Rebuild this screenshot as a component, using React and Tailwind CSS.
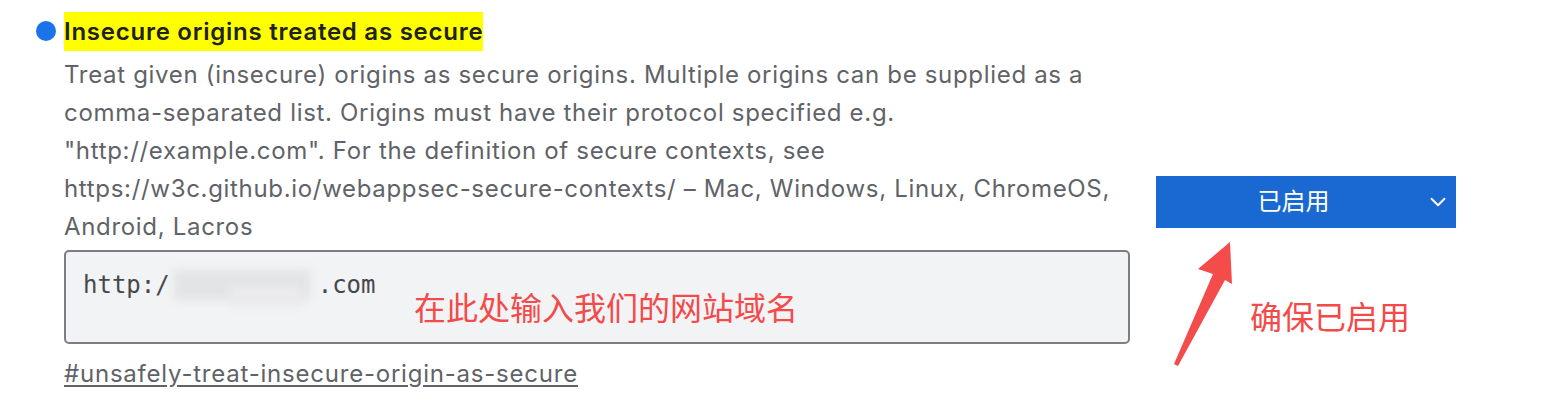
import { ChevronDown } from 'lucide-react'

const descLines = [
  'Treat given (insecure) origins as secure origins. Multiple origins can be supplied as a',
  'comma-separated list. Origins must have their protocol specified e.g.',
  '"http://example.com". For the definition of secure contexts, see',
  'https://w3c.github.io/webappsec-secure-contexts/ – Mac, Windows, Linux, ChromeOS,',
  'Android, Lacros',
]

const App = () => {
  return (
    <div className="relative w-[1542px] h-[420px] bg-white overflow-hidden font-['Inter','Noto_Sans_CJK_SC',sans-serif]">
      <div className="flex items-start pl-[36px] pt-[12px]">
        {/* Dot */}
        <div className="w-[20px] h-[20px] mt-[9px] rounded-full bg-[#1a73e8] shrink-0" />

        {/* Flag content */}
        <div className="ml-[8px] w-[1066px]">
          <h2 className="h-[39px]">
            <span className="inline-block bg-[#ffff00] text-[24px] leading-[39px] tracking-[0.75px] font-semibold text-[#202124]">
              Insecure origins treated as secure
            </span>
          </h2>
          <div className="mt-[5px] text-[24px] leading-[38px] tracking-[0.68px] text-[#5f6368]">
            {descLines.map((line) => (
              <div key={line} className="whitespace-nowrap">{line}</div>
            ))}
          </div>
          <div className="mt-[4px] h-[94px] rounded-[5px] border-2 border-[#7b7f84] bg-[#f1f3f4] pl-[17px] pt-[8px]">
            <div className="flex items-center font-['DejaVu_Sans_Mono',monospace] text-[24px] leading-[32px] text-[#45484c]">
              <span>http:/</span>
              <span className="relative inline-block w-[148px] h-[44px] mt-[6px]">
                <span className="absolute left-[4px] top-[4px] w-[136px] h-[30px] bg-[#e3e4e6] blur-[4px]" />
                <span className="absolute left-[60px] top-[20px] w-[72px] h-[20px] bg-[#ebebec] blur-[4px]" />
              </span>
              <span>.com</span>
            </div>
          </div>
          <a className="block mt-[11px] text-[24px] leading-[38px] tracking-[0.78px] text-[#5f6368] underline underline-offset-[3px]">
            #unsafely-treat-insecure-origin-as-secure
          </a>
        </div>

        {/* Select */}
        <div className="ml-[26px] mt-[164px] w-[300px] h-[52px] bg-[#1a69d3] flex items-center text-white">
          <span className="flex-1 text-center pl-[6px] text-[24px]">已启用</span>
          <ChevronDown size={26} strokeWidth={1.75} className="mr-[5px]" />
        </div>
      </div>

      {/* Annotations */}
      <div className="absolute left-[414px] top-[289px] text-[32px] leading-[40px] text-[#f34a4a]">
        在此处输入我们的网站域名
      </div>
      <div className="absolute left-[1250px] top-[298px] text-[32px] leading-[40px] text-[#f34a4a]">
        确保已启用
      </div>
      <svg className="absolute left-0 top-0" width="1542" height="420">
        <polygon
          points="1230,242 1232,284 1225,280 1178,366 1174,364 1213,274 1198,269"
          fill="#f44b4b"
        />
      </svg>
    </div>
  )
}

export default App
